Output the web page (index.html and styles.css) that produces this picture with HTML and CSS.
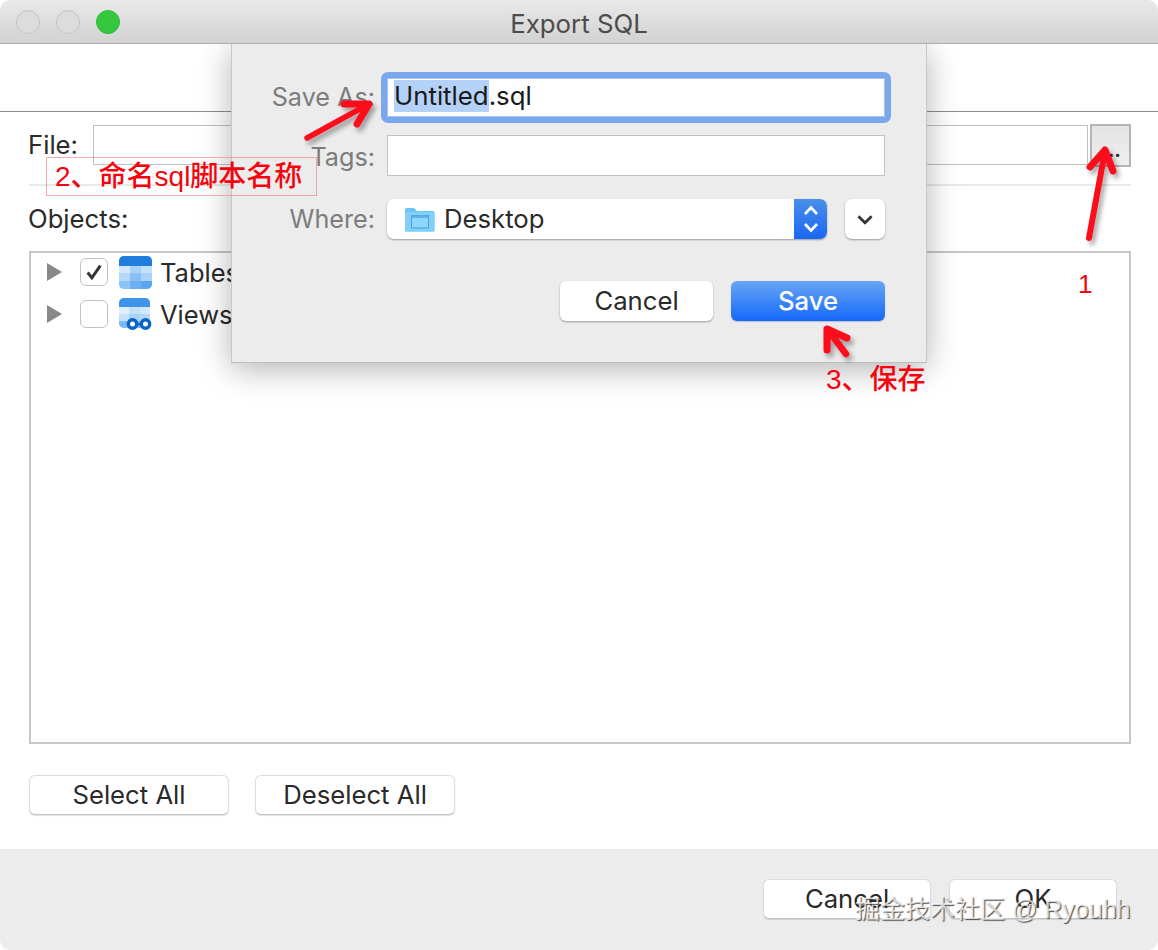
FILE: index.html
```html
<!DOCTYPE html>
<html lang="en">
<head>
<meta charset="utf-8">
<title>Export SQL</title>
<link rel="stylesheet" href="styles.css">
</head>
<body>
<div class="window">
  <header class="titlebar">
    <div class="lights">
      <span class="light"></span>
      <span class="light"></span>
      <span class="light light-green"></span>
    </div>
    <h1 class="title">Export SQL</h1>
  </header>
  <div class="toolbar"></div>
  <main class="content">
    <div class="file-row">
      <label class="label file-label">File:</label>
      <div class="file-input"></div>
      <button class="browse">...</button>
    </div>
    <div class="divider"></div>
    <div class="label objects-label">Objects:</div>
    <div class="tree">
      <div class="tree-row">
        <span class="disclosure"></span>
        <span class="check">
          <svg width="18" height="18" viewBox="0 0 17 17"><path d="M2.5 9 L6.5 14 L14.5 2.5" fill="none" stroke="#333" stroke-width="2.8"/></svg>
        </span>
        <svg class="obj-icon" width="33" height="33" viewBox="0 0 33 33">
          <defs><clipPath id="rt"><rect width="33" height="33" rx="5"/></clipPath></defs>
          <g clip-path="url(#rt)">
            <rect width="33" height="33" fill="#8cc4f7"/>
            <rect width="33" height="10" fill="#1f7ddc"/>
            <rect y="10" width="11" height="7.5" fill="#d4e8fb"/>
            <rect x="11" y="10" width="11" height="7.5" fill="#a9d2f8"/>
            <rect x="22" y="10" width="11" height="7.5" fill="#c5e0fa"/>
            <rect y="17.5" width="11" height="7.5" fill="#b5d8f9"/>
            <rect x="11" y="17.5" width="11" height="7.5" fill="#87bff5"/>
            <rect x="22" y="17.5" width="11" height="7.5" fill="#a9d2f8"/>
            <rect y="25" width="11" height="8" fill="#8cc4f7"/>
            <rect x="11" y="25" width="11" height="8" fill="#6cb0f3"/>
            <rect x="22" y="25" width="11" height="8" fill="#5aa6f2"/>
          </g>
        </svg>
        <span class="tree-text">Tables</span>
      </div>
      <div class="tree-row">
        <span class="disclosure"></span>
        <span class="check"></span>
        <svg class="obj-icon" width="33" height="33" viewBox="0 0 33 33">
          <defs><clipPath id="rv"><rect x="0" width="31" height="30" rx="5"/></clipPath></defs>
          <g clip-path="url(#rv)">
            <rect width="31" height="30" fill="#a9d2f8"/>
            <rect width="31" height="9" fill="#3f93ea"/>
            <rect y="9" width="10" height="7" fill="#e0effc"/>
            <rect x="10" y="9" width="11" height="7" fill="#c5e0fa"/>
            <rect x="21" y="9" width="10" height="7" fill="#d4e8fb"/>
            <rect y="16" width="10" height="7" fill="#c5e0fa"/>
            <rect x="10" y="16" width="11" height="7" fill="#a9d2f8"/>
            <rect x="21" y="16" width="10" height="7" fill="#b5d8f9"/>
            <rect y="23" width="31" height="7" fill="#7db9f5"/>
          </g>
          <circle cx="13.5" cy="26" r="4.2" fill="#fff" stroke="#0b63c5" stroke-width="3.4"/>
          <circle cx="26.5" cy="26" r="4.2" fill="#fff" stroke="#0b63c5" stroke-width="3.4"/>
          <rect x="17" y="25" width="6" height="2.4" fill="#0b63c5"/>
        </svg>
        <span class="tree-text">Views</span>
      </div>
    </div>
    <div class="select-row">
      <button class="btn btn-select">Select All</button>
      <button class="btn btn-select">Deselect All</button>
    </div>
  </main>
  <footer class="footer">
    <button class="btn btn-footer">Cancel</button>
    <button class="btn btn-footer">OK</button>
  </footer>

  <section class="sheet">
    <div class="form-row row-save">
      <span class="sheet-label save-label">Save As:</span>
      <div class="name-field"><span class="selected">Untitled</span>.sql</div>
    </div>
    <div class="form-row row-tags">
      <span class="sheet-label tags-label">Tags:</span>
      <div class="tags-field"></div>
    </div>
    <div class="form-row row-where">
      <span class="sheet-label">Where:</span>
      <div class="where-group">
        <div class="popup">
          <svg class="folder" width="31" height="25" viewBox="0 0 31 25">
            <path d="M1 3 Q1 1 3 1 H10 L13 4 H29 Q30.500 4 30.500 6 V23 Q30.500 24.500 29 24.500 H2.500 Q1 24.500 1 23 Z" fill="#6cc3f5"/>
            <rect x="1" y="5" width="29.500" height="19.500" rx="1" fill="#82d0f9"/>
            <rect x="7.500" y="8.500" width="17" height="12.500" fill="#8ed6fb" stroke="#4a9fd8" stroke-width="1"/>
            <rect x="7.500" y="8.500" width="17" height="2.500" fill="#5fb2e6"/>
          </svg>
          <span class="popup-text">Desktop</span>
          <span class="stepper">
            <svg width="18" height="30" viewBox="0 0 18 30"><path d="M3 10 L9 3.500 L15 10 M3 20 L9 26.500 L15 20" fill="none" stroke="#fff" stroke-width="2.600"/></svg>
          </span>
        </div>
        <div class="expand">
          <svg width="18" height="11" viewBox="0 0 16 10"><path d="M2 2 L8 8 L14 2" fill="none" stroke="#333" stroke-width="2.400"/></svg>
        </div>
      </div>
    </div>
    <div class="sheet-actions">
      <button class="sheet-btn">Cancel</button>
      <button class="sheet-btn sheet-save">Save</button>
    </div>
  </section>

  <svg class="arrows" width="1158" height="950" viewBox="0 0 1158 950">
    <defs>
      <filter id="sh" x="-30%" y="-30%" width="160%" height="160%">
        <feDropShadow dx="3" dy="4" stdDeviation="2.500" flood-color="#000" flood-opacity="0.35"/>
      </filter>
    </defs>
    <g fill="none" stroke="#fb0d1b" stroke-linecap="round" stroke-linejoin="round" filter="url(#sh)">
      <path stroke-width="6" d="M1089 238 L1105 151"/>
      <path stroke-width="7" d="M1090 167 L1105 150 L1113 171"/>
      <path stroke-width="5.500" d="M307 138 L367 105"/>
      <path stroke-width="7" d="M344 104 L369 104 L357 124"/>
      <path stroke-width="7" d="M827 350 L827 329 L847 338"/>
      <path stroke-width="6.500" d="M828 330 L846 354"/>
    </g>
  </svg>
  <div class="note note-box">2、命名sql脚本名称</div>
  <div class="note note-one">1</div>
  <div class="note note-three">3、保存</div>
  <div class="watermark">掘金技术社区 @ Ryouhh</div>
</div>
</body>
</html>
```

FILE: styles.css
```css
* { box-sizing: border-box; }
html, body { margin: 0; padding: 0; background: #fff; }
body { font-family: Inter, "Noto Sans", sans-serif; color: #2a2a2a; }
button { font: inherit; color: inherit; padding: 0; }

.window {
  position: relative;
  width: 1158px;
  height: 950px;
  overflow: hidden;
  background: #fff;
  display: flex;
  flex-direction: column;
  border-radius: 10px;
}

.titlebar {
  position: relative;
  z-index: 3;
  flex: none;
  height: 44px;
  padding-top: 3px;
  background: linear-gradient(#e9e9e9, #d2d2d2);
  border-bottom: 1px solid #acacac;
  display: flex;
  align-items: center;
  justify-content: center;
}
.lights { position: absolute; left: 16px; top: 10px; display: flex; gap: 16px; }
.light {
  width: 24px; height: 24px; border-radius: 50%;
  background: #dcdcdc; border: 1px solid #c4c4c4;
}
.light-green { background: #35c83f; border-color: #2fb83a; }
.title { margin: 0; font-size: 25.8px; font-weight: 400; color: #4c4c4c; }

.toolbar { flex: none; height: 68px; border-bottom: 1px solid #8c8c8c; }

.content { flex: none; height: 737px; padding: 12px 27px 0 29px; }
.file-row { display: flex; align-items: center; height: 43px; }
.label { font-size: 25.7px; line-height: 30px; color: #2a2a2a; margin-left: -1px; }
.file-label { width: 65px; padding-bottom: 2px; }
.file-input {
  align-self: flex-start;
  margin-top: 1px;
  width: 995px; height: 40px;
  border: 1px solid #c0c0c0;
  background: #fff;
}
.browse {
  margin-left: 2px;
  width: 41px; height: 43px;
  background: linear-gradient(#e4e4e4, #efefef);
  border: 2px solid #b4b4b4;
  font-size: 20px; font-weight: 700;
  text-align: right;
  padding: 8px 8px 0 0;
}
.divider { height: 2px; margin-top: 17px; background: #e9e9e9; }
.objects-label { margin-top: 18px; height: 30px; }
.tree {
  margin-top: 17px;
  height: 493px;
  border: 2px solid #c6c6c6;
}
.tree-row { display: flex; align-items: center; height: 42px; padding: 0 0 4px 16px; }
.disclosure {
  width: 0; height: 0;
  border-left: 15px solid #888;
  border-top: 9px solid transparent;
  border-bottom: 9px solid transparent;
}
.check {
  margin-left: 18px;
  width: 28px; height: 28px;
  border: 1px solid #c2c2c2;
  border-radius: 6px;
  background: #fff;
  display: flex; align-items: center; justify-content: center;
}
.obj-icon { margin-left: 11px; flex: none; }
.tree-text { margin-left: 8px; font-size: 25.5px; color: #2a2a2a; }

.select-row { display: flex; gap: 26px; margin-top: 31px; }
.btn {
  background: #fff;
  border: 1px solid #dcdcdc;
  border-bottom-color: #c4c4c4;
  border-radius: 6px;
  box-shadow: 0 1px 1px rgba(0,0,0,.12);
  font-size: 25.7px;
  color: #2a2a2a;
  padding-bottom: 2px;
}
.btn-select { width: 200px; height: 40px; }

.footer {
  flex: 1;
  background: #ececec;
  display: flex;
  justify-content: flex-end;
  gap: 18px;
  padding: 30px 41px 0 0;
}
.btn-footer { width: 168px; height: 40px; }

.sheet {
  position: absolute;
  z-index: 2;
  left: 231px; top: 44px;
  width: 696px; height: 319px;
  background: #ececec;
  border-right: 1px solid #c8c8c8;
  border-left: 1px solid #c8c8c8;
  border-bottom: 1px solid #bdbdbd;
  box-shadow: 0 6px 30px rgba(0,0,0,.3);
  padding-top: 34px;
}
.form-row { display: flex; align-items: center; }
.sheet-label { width: 143px; text-align: right; font-size: 25.2px; color: #7c7c7c; flex: none; }
.save-label { padding-bottom: 2px; }
.tags-label { padding-top: 3px; }
.name-field {
  margin-left: 12px;
  width: 498px; height: 39px;
  background: #fff;
  outline: 6px solid #7aa7ee;
  outline-offset: 0;
  border-radius: 1px;
  border: 1px solid #a8c2ee;
  font-size: 25.8px;
  line-height: 32px;
  color: #1a1a1a;
  padding: 1px 0 0 6px;
}
.selected { background: #b4d2f8; display: inline-block; }
.row-tags { margin-top: 18px; }
.tags-field {
  margin-left: 12px;
  width: 498px; height: 41px;
  background: #fff;
  border: 1px solid #c0c0c0;
}
.row-where { margin-top: 23px; }
.where-group { margin-left: 12px; display: flex; gap: 18px; }
.popup {
  width: 440px; height: 40px;
  background: #fff;
  border-radius: 7px;
  box-shadow: 0 1px 2px rgba(0,0,0,.35);
  display: flex;
  align-items: center;
  padding-left: 17px;
  overflow: hidden;
}
.folder { flex: none; }
.popup-text { margin-left: 9px; padding-bottom: 2px; font-size: 25.7px; color: #2a2a2a; flex: 1; }
.stepper {
  width: 33px; height: 40px;
  background: linear-gradient(#4a8fe8, #1a66f5);
  display: flex; align-items: center; justify-content: center;
}
.expand {
  width: 40px; height: 40px;
  background: #fff;
  border-radius: 7px;
  box-shadow: 0 1px 2px rgba(0,0,0,.35);
  display: flex; align-items: center; justify-content: center;
}
.sheet-actions {
  display: flex;
  justify-content: flex-end;
  gap: 18px;
  margin-top: 42px;
  padding-right: 41px;
}
.sheet-btn {
  width: 153px; height: 40px;
  background: #fff;
  border: 0;
  border-radius: 6px;
  box-shadow: 0 1px 2px rgba(0,0,0,.35);
  font-size: 25.7px;
  color: #2a2a2a;
  padding-bottom: 2px;
}
.sheet-save {
  width: 154px;
  background: linear-gradient(#66a5f5, #1668fb);
  color: #fff;
  font-weight: 500;
  box-shadow: 0 1px 1px rgba(0,0,0,.2);
}

.arrows { position: absolute; z-index: 4; left: 0; top: 0; pointer-events: none; }
.note {
  position: absolute;
  z-index: 5;
  font-family: "Liberation Sans", "Noto Sans CJK SC", sans-serif;
  color: #f5040f;
  white-space: nowrap;
}
.note-box {
  left: 46px; top: 157px;
  width: 271px; height: 39px;
  border: 1px solid rgba(238,120,120,.6);
  font-size: 28px;
  font-weight: 500;
  line-height: 38px;
  padding-left: 8px;
}
.note-one { left: 1078px; top: 270px; font-size: 26px; line-height: 28px; }
.note-three { left: 826px; top: 365px; font-size: 28px; font-weight: 500; line-height: 30px; }
.watermark {
  position: absolute;
  z-index: 6;
  left: 855px; top: 894px;
  font-family: "Liberation Sans", "Noto Sans CJK SC", sans-serif;
  font-size: 25px;
  line-height: 30px;
  white-space: nowrap;
  color: rgba(255,255,255,.75);
  text-shadow: 1px 1px 1px rgba(60,60,60,.9);
}
```
